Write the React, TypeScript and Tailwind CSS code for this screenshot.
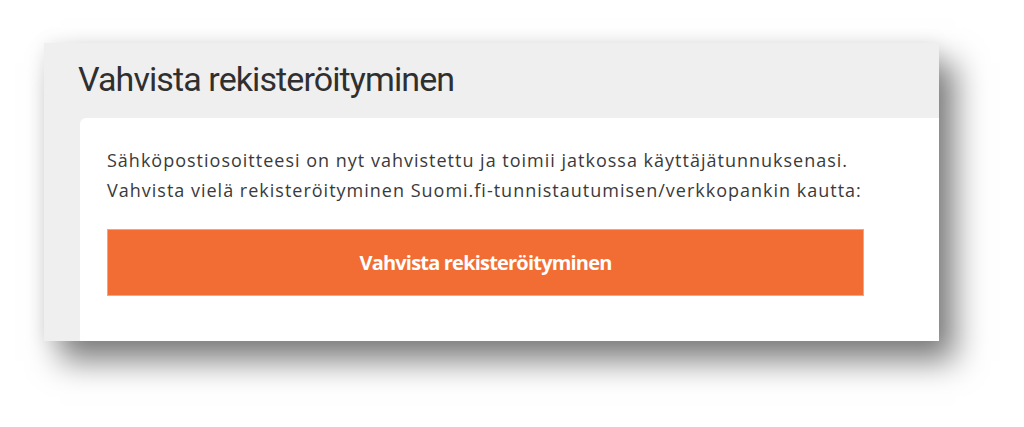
import React from "react";

export default function App() {
  return (
    <div className="w-[1024px] h-[427px] bg-white overflow-hidden pt-[43px] pl-[44px]" style={{ fontFamily: '"Open Sans", "Noto Sans", sans-serif' }}>
      <div className="w-[895px] h-[298px] bg-[#efefef] flex flex-col shadow-[16px_20px_30px_rgba(0,0,0,0.5),0_0_18px_rgba(0,0,0,0.07)]">
        <div className="h-[75px] pl-[34px] pt-[14px] text-[34px] leading-[44px] text-[#2f2f2f] tracking-[-0.9px]" style={{ fontFamily: 'Roboto, "Open Sans", sans-serif' }}>
          Vahvista rekisteröityminen
        </div>
        <div className="ml-[36px] flex-1 bg-white rounded-tl-[6px] pl-[27px] pt-[27px]">
          <p className="text-[18px] leading-[30px] text-[#3a3a3a] tracking-[1px]">
            Sähköpostiosoitteesi on nyt vahvistettu ja toimii jatkossa käyttäjätunnuksenasi.
            <br />
            Vahvista vielä rekisteröityminen Suomi.fi-tunnistautumisen/verkkopankin kautta:
          </p>
          <button className="mt-[24px] w-[757px] h-[67px] bg-[#f26d34] border border-[#f4a47f] text-white text-[20px] font-bold tracking-[-0.8px] flex items-center justify-center">
            Vahvista rekisteröityminen
          </button>
        </div>
      </div>
    </div>
  );
}
